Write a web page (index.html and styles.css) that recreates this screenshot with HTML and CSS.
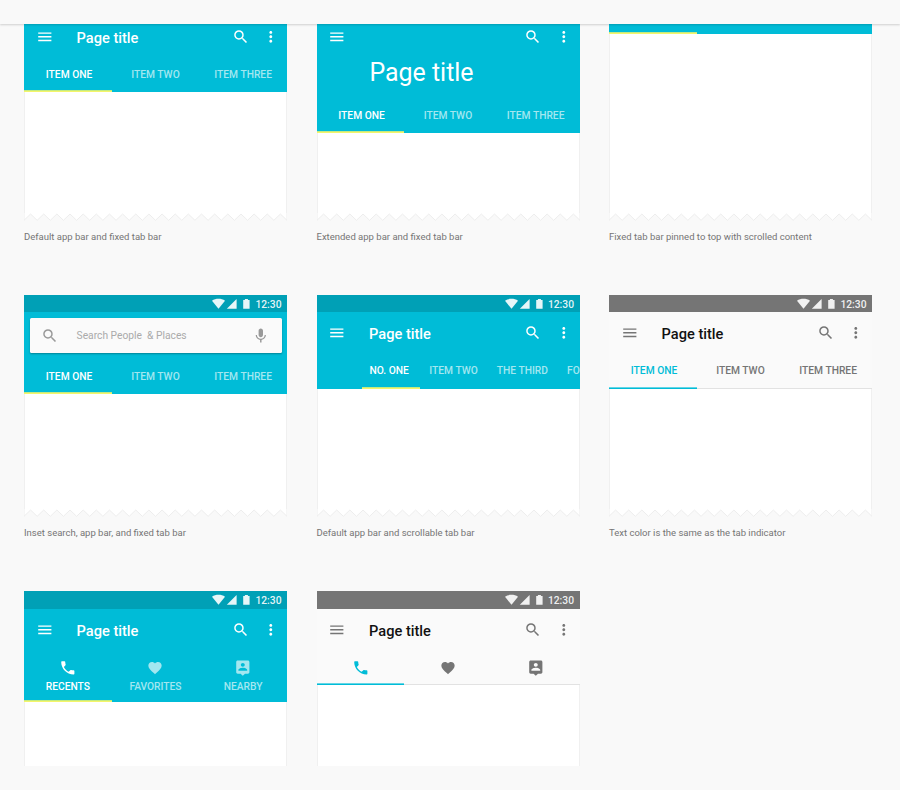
FILE: index.html
```
<!DOCTYPE html>
<html lang="en">
<head>
<meta charset="utf-8">
<title>Tabs</title>
<link rel="stylesheet" href="styles.css">
</head>
<body>
<svg class="defs" width="0" height="0">
  <symbol id="menu" viewBox="0 0 24 24"><path d="M3 18h18v-2H3v2zm0-5h18v-2H3v2zm0-7v2h18V6H3z"/></symbol>
  <symbol id="search" viewBox="0 0 24 24"><path d="M15.5 14h-.79l-.28-.27A6.47 6.47 0 0 0 16 9.500 6.500 6.500 0 1 0 9.500 16c1.610 0 3.090-.59 4.230-1.570l.27.28v.79l5 4.990L20.490 19l-4.990-5zm-6 0C7.010 14 5 11.990 5 9.500S7.010 5 9.500 5 14 7.010 14 9.500 11.990 14 9.500 14z"/></symbol>
  <symbol id="more" viewBox="0 0 24 24"><path d="M12 8c1.100 0 2-.9 2-2s-.9-2-2-2-2 .9-2 2 .9 2 2 2zm0 2c-1.100 0-2 .9-2 2s.9 2 2 2 2-.9 2-2-.9-2-2-2zm0 6c-1.100 0-2 .9-2 2s.9 2 2 2 2-.9 2-2-.9-2-2-2z"/></symbol>
  <symbol id="mic" viewBox="0 0 24 24"><path d="M12 14c1.660 0 2.990-1.340 2.990-3L15 5c0-1.660-1.340-3-3-3S9 3.340 9 5v6c0 1.660 1.340 3 3 3zm5.300-3c0 3-2.540 5.100-5.300 5.100S6.700 14 6.700 11H5c0 3.410 2.720 6.230 6 6.720V21h2v-3.280c3.280-.48 6-3.300 6-6.720h-1.700z"/></symbol>
  <symbol id="phone" viewBox="0 0 24 24"><path d="M6.620 10.790c1.440 2.830 3.760 5.140 6.590 6.590l2.200-2.200c.27-.27.67-.36 1.020-.24 1.120.37 2.330.57 3.570.57.550 0 1 .45 1 1V20c0 .55-.45 1-1 1C10.610 21 3 13.390 3 4c0-.55.450-1 1-1h3.500c.550 0 1 .45 1 1 0 1.250.2 2.450.57 3.570.110.350.030.740-.25 1.020l-2.200 2.200z"/></symbol>
  <symbol id="heart" viewBox="0 0 24 24"><path d="M12 21.350l-1.450-1.320C5.400 15.360 2 12.280 2 8.500 2 5.420 4.420 3 7.500 3c1.740 0 3.410.81 4.500 2.090C13.090 3.810 14.760 3 16.500 3 19.580 3 22 5.420 22 8.500c0 3.780-3.400 6.860-8.550 11.540L12 21.350z"/></symbol>
  <symbol id="nearby" viewBox="0 0 24 24"><path d="M19 2H5c-1.110 0-2 .9-2 2v14c0 1.100.89 2 2 2h4l3 3 3-3h4c1.100 0 2-.9 2-2V4c0-1.100-.9-2-2-2zm-7 3.300c1.490 0 2.700 1.210 2.700 2.700s-1.210 2.700-2.700 2.700S9.300 9.490 9.300 8s1.210-2.700 2.700-2.700zM18 16H6v-.9c0-2 4-3.100 6-3.100s6 1.100 6 3.100v.9z"/></symbol>
  <symbol id="signals" viewBox="0 0 40 12"><path d="M0 2.700C3.600.2 9.400.2 13 2.700L6.500 10.800z"/><path d="M24.600 1v9.800h-9.800z"/><path d="M31.200 2.100h1.700V1h3v1.100h1.700v8.700h-6.400z"/></symbol>
  <symbol id="tear" viewBox="0 0 263 8"><path class="paper" d="M0 0V7.300l6.575-6.300 6.575 6.300 6.575-6.300 6.575 6.300 6.575-6.300 6.575 6.300 6.575-6.300 6.575 6.300 6.575-6.300 6.575 6.300 6.575-6.300 6.575 6.300 6.575-6.300 6.575 6.300 6.575-6.300 6.575 6.300 6.575-6.300 6.575 6.300 6.575-6.300 6.575 6.300 6.575-6.300 6.575 6.300 6.575-6.300 6.575 6.300 6.575-6.300 6.575 6.300 6.575-6.300 6.575 6.300 6.575-6.300 6.575 6.300 6.575-6.300 6.575 6.300 6.575-6.300 6.575 6.300 6.575-6.300 6.575 6.300 6.575-6.300 6.575 6.300 6.575-6.300 6.575 6.300V0"/></symbol>
</svg>

<header class="topbar"></header>
<main class="viewport">
  <div class="gallery">

    <figure class="example">
      <div class="phone">
        <div class="head">
          <div class="status"></div>
          <div class="appbar"><svg class="icon"><use href="#menu"/></svg><span class="title">Page title</span><svg class="icon"><use href="#search"/></svg><svg class="icon more"><use href="#more"/></svg></div>
          <div class="tabs short"><span class="tab on">ITEM ONE</span><span class="tab">ITEM TWO</span><span class="tab">ITEM THREE</span></div>
        </div>
        <div class="body"></div><svg class="tear"><use href="#tear"/></svg>
      </div>
      <figcaption>Default app bar and fixed tab bar</figcaption>
    </figure>

    <figure class="example">
      <div class="phone">
        <div class="head">
          <div class="status"></div>
          <div class="appbar"><svg class="icon"><use href="#menu"/></svg><span class="title"></span><svg class="icon"><use href="#search"/></svg><svg class="icon more"><use href="#more"/></svg></div>
          <div class="bigtitle">Page title</div>
          <div class="tabs short"><span class="tab on">ITEM ONE</span><span class="tab">ITEM TWO</span><span class="tab">ITEM THREE</span></div>
        </div>
        <div class="body"></div><svg class="tear"><use href="#tear"/></svg>
      </div>
      <figcaption>Extended app bar and fixed tab bar</figcaption>
    </figure>

    <figure class="example">
      <div class="phone">
        <div class="head">
          <div class="tabs"><span class="tab on"></span><span class="tab"></span><span class="tab"></span></div>
        </div>
        <div class="body"></div><svg class="tear"><use href="#tear"/></svg>
      </div>
      <figcaption>Fixed tab bar pinned to top with scrolled content</figcaption>
    </figure>

    <figure class="example">
      <div class="phone">
        <div class="head">
          <div class="status"><svg class="signals"><use href="#signals"/></svg><span>12:30</span></div>
          <div class="inset"><div class="searchbox"><svg class="icon"><use href="#search"/></svg><span class="hint">Search People&nbsp; &amp; Places</span><svg class="icon"><use href="#mic"/></svg></div></div>
          <div class="tabs low"><span class="tab on">ITEM ONE</span><span class="tab">ITEM TWO</span><span class="tab">ITEM THREE</span></div>
        </div>
        <div class="body"></div><svg class="tear"><use href="#tear"/></svg>
      </div>
      <figcaption>Inset search, app bar, and fixed tab bar</figcaption>
    </figure>

    <figure class="example">
      <div class="phone">
        <div class="head">
          <div class="status"><svg class="signals"><use href="#signals"/></svg><span>12:30</span></div>
          <div class="appbar"><svg class="icon"><use href="#menu"/></svg><span class="title">Page title</span><svg class="icon"><use href="#search"/></svg><svg class="icon more"><use href="#more"/></svg></div>
          <div class="tabs scrollable"><span class="tab on">NO. ONE</span><span class="tab">ITEM TWO</span><span class="tab">THE THIRD</span><span class="tab last">FO</span></div>
        </div>
        <div class="body"></div><svg class="tear"><use href="#tear"/></svg>
      </div>
      <figcaption>Default app bar and scrollable tab bar</figcaption>
    </figure>

    <figure class="example">
      <div class="phone">
        <div class="head light">
          <div class="status"><svg class="signals"><use href="#signals"/></svg><span>12:30</span></div>
          <div class="appbar"><svg class="icon"><use href="#menu"/></svg><span class="title">Page title</span><svg class="icon"><use href="#search"/></svg><svg class="icon more"><use href="#more"/></svg></div>
          <div class="tabs"><span class="tab on">ITEM ONE</span><span class="tab">ITEM TWO</span><span class="tab">ITEM THREE</span></div>
        </div>
        <div class="body"></div><svg class="tear"><use href="#tear"/></svg>
      </div>
      <figcaption>Text color is the same as the tab indicator</figcaption>
    </figure>

    <figure class="example">
      <div class="phone">
        <div class="head">
          <div class="status"><svg class="signals"><use href="#signals"/></svg><span>12:30</span></div>
          <div class="appbar"><svg class="icon"><use href="#menu"/></svg><span class="title">Page title</span><svg class="icon"><use href="#search"/></svg><svg class="icon more"><use href="#more"/></svg></div>
          <div class="tabs stacked"><span class="tab on"><svg class="icon"><use href="#phone"/></svg>RECENTS</span><span class="tab"><svg class="icon heart"><use href="#heart"/></svg>FAVORITES</span><span class="tab"><svg class="icon"><use href="#nearby"/></svg>NEARBY</span></div>
        </div>
        <div class="body"></div>
      </div>
    </figure>

    <figure class="example">
      <div class="phone">
        <div class="head light">
          <div class="status"><svg class="signals"><use href="#signals"/></svg><span>12:30</span></div>
          <div class="appbar"><svg class="icon"><use href="#menu"/></svg><span class="title">Page title</span><svg class="icon"><use href="#search"/></svg><svg class="icon more"><use href="#more"/></svg></div>
          <div class="tabs icons"><span class="tab on"><svg class="icon"><use href="#phone"/></svg></span><span class="tab"><svg class="icon heart"><use href="#heart"/></svg></span><span class="tab"><svg class="icon"><use href="#nearby"/></svg></span></div>
        </div>
        <div class="body"></div>
      </div>
    </figure>

  </div>
</main>
</body>
</html>
```
FILE: styles.css
```
* { box-sizing: border-box; }
body {
  margin: 0;
  height: 790px;
  overflow: hidden;
  background: #f9f9f9;
  font-family: Roboto, "Liberation Sans", sans-serif;
}
.defs { display: block; }
.topbar {
  position: relative;
  height: 24px;
  background: #f9f9f9;
  box-shadow: 0 1px 2px rgba(0, 0, 0, .17);
  z-index: 1;
}
.viewport { height: 742px; overflow: hidden; }
.gallery {
  display: grid;
  grid-template-columns: repeat(3, 263px);
  grid-auto-rows: 296px;
  column-gap: 29.5px;
  margin: -25px 0 0 24px;
}
.example { margin: 0; }
.phone {
  display: flex;
  flex-direction: column;
  height: 222px;
}
.head { flex: none; background: #00bcd7; color: #fff; }
.body {
  flex: 1;
  background: #fff;
  border: solid #f0f0f0;
  border-width: 0 1px;
}
.tear { display: block; width: 263px; height: 8px; }
.paper { fill: #fff; stroke: #ededed; stroke-width: 1; }
figcaption {
  margin-top: 9px;
  font-size: 9.5px;
  line-height: 13px;
  color: #757575;
  white-space: nowrap;
}
.status {
  display: flex;
  align-items: center;
  justify-content: flex-end;
  gap: 2px;
  height: 17px;
  padding: 1px 5.5px 0 0;
  background: #00a0b6;
  color: rgba(255, 255, 255, .9);
  font-size: 10.3px;
  font-weight: 500;
}
.signals { width: 40px; height: 12px; fill: currentColor; margin-right: 1px; }
.icon { flex: none; display: block; width: 17.6px; height: 17.6px; fill: currentColor; }
.appbar {
  display: flex;
  align-items: center;
  height: 42px;
  padding: 0 7px 0 11.7px;
}
.title {
  flex: 1;
  padding: 2px 0 0 23.3px;
  font-size: 14.6px;
  line-height: 18px;
  font-weight: 500;
}
.more { margin-left: 13.3px; }
.bigtitle {
  height: 41px;
  padding-left: 53px;
  font-size: 24.9px;
  line-height: 29.5px;
}
.tabs {
  display: flex;
  height: 35px;
  font-size: 10.25px;
  line-height: 12px;
  font-weight: 500;
}
.tabs.short { height: 34px; }
.tab {
  flex: 0 0 33.333%;
  display: flex;
  flex-direction: column;
  align-items: center;
  padding-top: 11px;
  color: #a3e7f0;
  white-space: nowrap;
}
.low .tab { padding-top: 12px; }
.tab.on {
  padding-left: 2.5px;
  color: #fff;
  border-bottom: 1px solid #f4f56b;
  box-shadow: inset 0 -1px rgba(244, 245, 107, .8);
}
.scrollable { padding-left: 45px; }
.scrollable .tab { flex: none; padding-left: 9.5px; padding-right: 9.500px; }
.scrollable .tab.on { padding-left: 8px; padding-right: 11px; }
.scrollable .tab.last { padding-right: 0; }
.tabs.stacked { height: 52px; }
.stacked .tab, .icons .tab { padding: 8.5px 0 0; }
.stacked .icon { margin-bottom: 5.400px; }
.icon.heart { width: 16px; height: 16px; margin-top: 1.1px; }
.stacked .heart { margin-bottom: 5.900px; }
.inset { height: 47px; padding: 6px 5.5px 0 6px; }
.searchbox {
  display: flex;
  align-items: center;
  height: 35px;
  padding: 0 12px 0 11px;
  border-radius: 1.5px;
  background: #fafafa;
  box-shadow: 0 1px 2px rgba(0, 0, 0, .3);
  color: #999;
}
.hint { flex: 1; padding-left: 18px; color: #aaa; font-size: 10.25px; }
.light { background: #fafafa; color: #757575; }
.light .status { background: #757575; }
.light .title { color: #111; }
.light .tabs { box-shadow: inset 0 -1px #e2e2e2; }
.light .tab { color: #757575; }
.light .tab.on {
  color: #00bcd7;
  border-color: #00bcd7;
  box-shadow: inset 0 -1px rgba(0, 188, 215, .6);
}
.example:nth-child(n+7) .status { height: 18px; padding-top: 0; }
.example:nth-child(n+7) .appbar { height: 41px; }
```
